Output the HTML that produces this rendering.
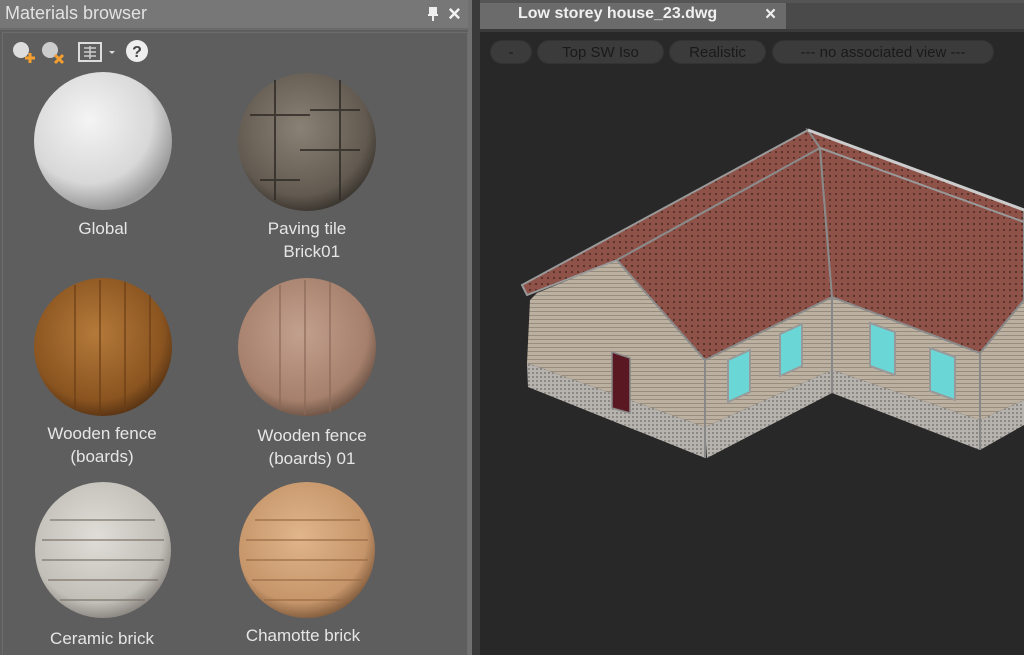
<!DOCTYPE html>
<html><head><meta charset="utf-8"><style>
*{margin:0;padding:0;box-sizing:border-box}
body{width:1024px;height:655px;overflow:hidden;background:#282828;font-family:"Liberation Sans",sans-serif;position:relative}
.abs{position:absolute}
.lbl{position:absolute;color:#e6e6e6;font-size:17px;text-align:center;line-height:23px;width:200px}
.pill{position:absolute;top:40px;height:24px;border-radius:12px;background:#3b3b3b;color:#1a1a1a;font-size:15px;line-height:24px;text-align:center;border:1px solid #333}
</style></head><body>
<div class="abs" style="left:0;top:0;width:472px;height:655px;background:#5e5e5e"></div>
<div class="abs" style="left:0;top:0;width:472px;height:30px;background:#777;border-bottom:2px solid #6a6a6a"></div>
<div class="abs" style="left:5px;top:3px;color:#e2e2e2;font-size:18px">Materials browser</div>
<svg class="abs" style="left:426px;top:6px" width="14" height="16"><path d="M3 2h8M4 2v7h6V2M2 9h10M7 9v6" stroke="#eee" stroke-width="2" fill="#eee"/></svg>
<div class="abs" style="left:448px;top:1px;color:#f2f2f2;font-size:22px;font-weight:bold">×</div>
<div class="abs" style="left:2px;top:32px;width:466px;height:623px;border:1px solid #6c6c6c;border-bottom:none"></div>
<div class="abs" style="left:468px;top:0;width:4px;height:655px;background:#707070"></div>
<div class="abs" style="left:472px;top:0;width:8px;height:655px;background:#3a3a3a"></div>
<svg class="abs" style="left:8px;top:38px" width="150" height="28">
<circle cx="13" cy="12" r="8" fill="#ddd"/><path d="M17 20h10M22 15v10" stroke="#f4a030" stroke-width="3"/>
<circle cx="42" cy="12" r="8" fill="#ccc"/><path d="M47 17l8 8M55 17l-8 8" stroke="#f4a030" stroke-width="3"/>
<rect x="71" y="5" width="22" height="18" fill="none" stroke="#ddd" stroke-width="2"/><path d="M76 10h12M76 14h12M76 18h12M82 8v13" stroke="#ccc" stroke-width="1.5"/>
<path d="M101 13h6l-3 3z" fill="#ddd"/>
<circle cx="129" cy="13" r="11" fill="#eee"/><text x="129" y="19" text-anchor="middle" font-size="16" font-weight="bold" fill="#444" font-family="Liberation Sans">?</text>
</svg>
<svg class="abs" style="left:0;top:0" width="472" height="655">
<defs>
<radialGradient id="g1" cx="40%" cy="35%" r="65%"><stop offset="0" stop-color="#f4f4f4"/><stop offset=".7" stop-color="#d8d8d8"/><stop offset="1" stop-color="#999"/></radialGradient>
<radialGradient id="g2" cx="45%" cy="40%" r="65%"><stop offset="0" stop-color="#8a8175"/><stop offset=".75" stop-color="#625a50"/><stop offset="1" stop-color="#2e2a25"/></radialGradient>
<radialGradient id="g3" cx="45%" cy="40%" r="65%"><stop offset="0" stop-color="#b47a3a"/><stop offset=".75" stop-color="#8a5420"/><stop offset="1" stop-color="#4a2a10"/></radialGradient>
<radialGradient id="g4" cx="45%" cy="40%" r="65%"><stop offset="0" stop-color="#c2a08e"/><stop offset=".75" stop-color="#a6806c"/><stop offset="1" stop-color="#5c463a"/></radialGradient>
<radialGradient id="g5" cx="45%" cy="40%" r="65%"><stop offset="0" stop-color="#e0ddd8"/><stop offset=".75" stop-color="#c2beb8"/><stop offset="1" stop-color="#7a7570"/></radialGradient>
<radialGradient id="g6" cx="45%" cy="40%" r="65%"><stop offset="0" stop-color="#e0b68a"/><stop offset=".75" stop-color="#c6956a"/><stop offset="1" stop-color="#6e4c30"/></radialGradient>
</defs>
<circle cx="103" cy="141" r="69" fill="url(#g1)"/>
<circle cx="307" cy="142" r="69" fill="url(#g2)"/>
<g stroke="#2e2a26" stroke-width="2" fill="none" opacity=".8"><path d="M275 80v120M340 80v120M250 115h60M300 150h60M260 180h40M310 110h50"/></g>
<circle cx="103" cy="347" r="69" fill="url(#g3)"/>
<g stroke="#6a3c14" stroke-width="2" opacity=".6"><path d="M75 285v125M100 280v135M125 282v130M150 295v100"/></g>
<circle cx="307" cy="347" r="69" fill="url(#g4)"/>
<g stroke="#8a6858" stroke-width="2" opacity=".6"><path d="M280 285v125M305 280v135M330 282v130"/></g>
<circle cx="103" cy="550" r="68" fill="url(#g5)"/>
<g stroke="#7a7268" stroke-width="1.5" opacity=".8"><path d="M50 520h105M42 540h122M42 560h122M48 580h110M60 600h85"/></g>
<circle cx="307" cy="550" r="68" fill="url(#g6)"/>
<g stroke="#9a6a44" stroke-width="1.5" opacity=".8"><path d="M255 520h105M246 540h122M246 560h122M252 580h110M264 600h85"/></g>
</svg>
<div class="lbl" style="left:3px;top:217px">Global</div>
<div class="lbl" style="left:207px;top:217px">Paving tile<br>&nbsp;&nbsp;Brick01</div>
<div class="lbl" style="left:2px;top:422px">Wooden fence<br>(boards)</div>
<div class="lbl" style="left:212px;top:424px">Wooden fence<br>(boards) 01</div>
<div class="lbl" style="left:2px;top:627px">Ceramic brick</div>
<div class="lbl" style="left:203px;top:624px">Chamotte brick</div>
<div class="abs" style="left:480px;top:0;width:544px;height:29px;background:#4a4a4a"></div>
<div class="abs" style="left:480px;top:0;width:544px;height:3px;background:#555"></div>
<div class="abs" style="left:480px;top:3px;width:306px;height:26px;background:#6b6b6b"></div>
<div class="abs" style="left:518px;top:5px;color:#f0f0f0;font-size:16px;font-weight:bold">Low storey house_23.dwg</div>
<div class="abs" style="left:765px;top:4px;color:#eee;font-size:19px;font-weight:bold">×</div>
<div class="abs" style="left:480px;top:29px;width:544px;height:3px;background:#3a3a3a"></div>
<div class="pill" style="left:490px;width:42px">-</div>
<div class="pill" style="left:537px;width:127px">Top SW Iso</div>
<div class="pill" style="left:669px;width:97px">Realistic</div>
<div class="pill" style="left:772px;width:222px">--- no associated view ---</div>
<svg class="abs" style="left:0;top:0" width="1024" height="655">
<defs>
<pattern id="rt" width="6" height="6" patternUnits="userSpaceOnUse"><rect width="6" height="6" fill="#8e5248"/><circle cx="2" cy="2" r="1" fill="#4a2a24"/></pattern>
<pattern id="wl" width="4" height="4" patternUnits="userSpaceOnUse"><rect width="4" height="4" fill="#bcb1a0"/><rect y="3" width="4" height="1" fill="#978d7e"/></pattern>
<pattern id="pl" width="4" height="4" patternUnits="userSpaceOnUse"><rect width="4" height="4" fill="#b6b2ad"/><rect width="2" height="2" fill="#8c8884"/></pattern>
</defs>
<polygon points="527,363 705,427 705,458 528,387" fill="url(#pl)"/>
<polygon points="705,427 832,370 832,393 707,458" fill="url(#pl)"/>
<polygon points="832,370 980,420 980,450 832,393" fill="url(#pl)"/>
<polygon points="980,420 1024,400 1024,425 980,450" fill="url(#pl)"/>
<polygon points="537,293 617,260 705,360 705,427 527,363 530,300" fill="url(#wl)"/>
<polygon points="705,360 832,297 832,370 705,427" fill="url(#wl)"/>
<polygon points="832,297 980,353 980,420 832,370" fill="url(#wl)"/>
<polygon points="980,353 1024,300 1024,400 980,420" fill="url(#wl)"/>
<line x1="705" y1="360" x2="705" y2="458" stroke="#888" stroke-width="2"/>
<line x1="832" y1="297" x2="832" y2="393" stroke="#888" stroke-width="2"/>
<line x1="980" y1="353" x2="980" y2="450" stroke="#888" stroke-width="2"/>
<polygon points="612,352 630,358 630,413 612,408" fill="#5a1822" stroke="#888" stroke-width="1.5"/>
<polygon points="728,360 750,350 750,392 728,402" fill="#6ad6d6" stroke="#999" stroke-width="2"/>
<polygon points="780,334 802,324 802,366 780,376" fill="#6ad6d6" stroke="#999" stroke-width="2"/>
<polygon points="870,323 895,332 895,375 870,366" fill="#6ad6d6" stroke="#999" stroke-width="2"/>
<polygon points="930,348 955,357 955,400 930,391" fill="#6ad6d6" stroke="#999" stroke-width="2"/>
<polygon points="808,130 522,285 527,295 617,260 820,148" fill="url(#rt)" stroke="#999" stroke-width="2"/>
<polygon points="617,260 820,148 832,297 705,360" fill="url(#rt)" stroke="#8a8a8a" stroke-width="2"/>
<polygon points="820,148 808,130 1024,210 1024,300 980,353 832,297" fill="url(#rt)" stroke="#8a8a8a" stroke-width="2"/>
<line x1="808" y1="130" x2="1024" y2="210" stroke="#ccc" stroke-width="3"/>
<line x1="820" y1="148" x2="1024" y2="222" stroke="#999" stroke-width="2"/>
</svg>
</body></html>
